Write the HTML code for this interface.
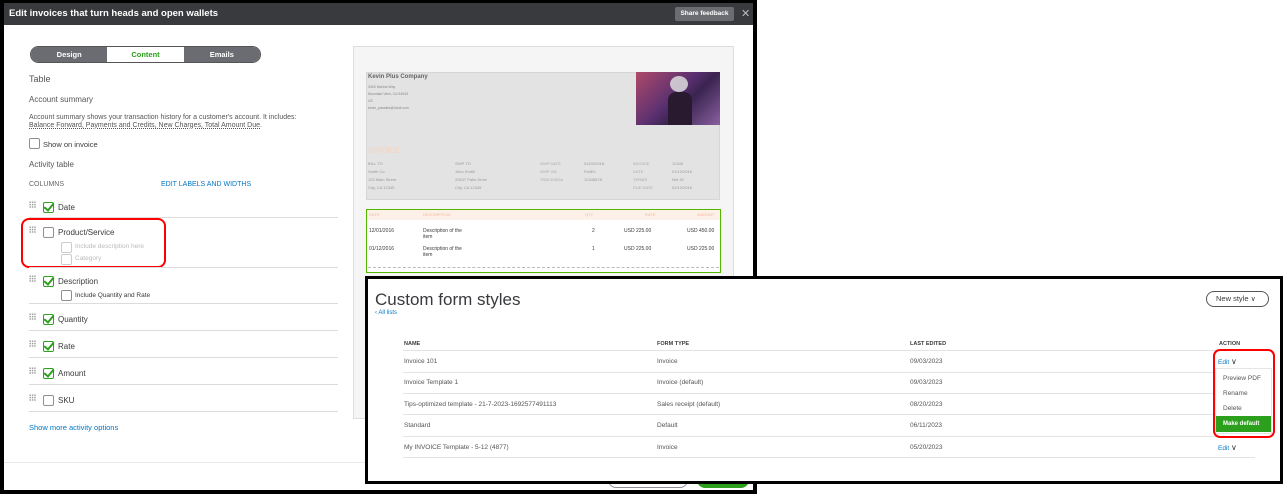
<!DOCTYPE html>
<html><head><style>
*{box-sizing:border-box;margin:0;padding:0}
body{width:1284px;height:496px;background:#fff;position:relative;overflow:hidden;font-family:"Liberation Sans",sans-serif;color:#393a3d}
.a{position:absolute}
.t{position:absolute;font-size:8px;white-space:nowrap}
.cb{position:absolute;width:11px;height:11px;border:1px solid #8d9096;border-radius:2px;background:#fff}
.cb.on{border-color:#2ca01c}
.cb.on::after{content:"";position:absolute;left:2px;top:-2px;width:4px;height:8px;border:solid #2ca01c;border-width:0 2px 2px 0;transform:rotate(40deg)}
.cb.lt{border-color:#ccc}
.grip{position:absolute;width:7px;height:7px;background-image:radial-gradient(#999 0.7px,transparent 0.8px);background-size:2.4px 2.4px}
.hl{position:absolute;left:29px;width:309px;height:1px;background:#dcdcdc}
.rl{position:absolute;left:403px;width:852px;height:1px;background:#e3e3e3}
.r{position:absolute;font-size:6.5px;color:#555;white-space:nowrap}
</style></head><body>
<div class="a" style="left:0;top:0;width:757px;height:494px;border:4px solid #000;border-top-width:3px;background:#fff"></div>
<div class="a" style="left:4px;top:3px;width:749px;height:22px;background:#393a3d"></div>
<div class="t" style="left:9px;top:8px;font-size:9.5px;color:#fff;font-weight:bold">Edit invoices that turn heads and open wallets</div>
<div class="a" style="left:675px;top:7px;width:59px;height:14px;background:#6b6c72;border-radius:2px;color:#fff;font-size:6.5px;font-weight:bold;text-align:center;line-height:14px">Share feedback</div>
<div class="t" style="left:741px;top:7px;font-size:11px;color:#bbb">✕</div>
<div class="a" style="left:30px;top:46px;width:231px;height:17px;border:1px solid #555;border-radius:9px;overflow:hidden;display:flex;font-size:7.5px;font-weight:bold;line-height:15px;text-align:center">
<div style="flex:1;background:#6b6c72;color:#fff">Design</div><div style="flex:1;background:#fff;color:#2ca01c">Content</div><div style="flex:1;background:#6b6c72;color:#fff">Emails</div></div>
<div class="t" style="left:29px;top:74px;font-size:9px;color:#555">Table</div>
<div class="t" style="left:29px;top:95px;color:#555">Account summary</div>
<div class="t" style="left:29px;top:114px;font-size:7px;color:#555">Account summary shows your transaction history for a customer's account. It includes:</div>
<div class="t" style="left:29px;top:122px;font-size:7px;color:#555;text-decoration:underline dotted">Balance Forward, Payments and Credits, New Charges, Total Amount Due.</div>
<div class="cb" style="left:29px;top:138px"></div><div class="t" style="left:43px;top:140px;font-size:7.5px">Show on invoice</div>
<div class="t" style="left:29px;top:160px;color:#555">Activity table</div>
<div class="t" style="left:29px;top:181px;font-size:7px;color:#666">COLUMNS</div>
<div class="t" style="left:161px;top:181px;font-size:7px;color:#0077c5">EDIT LABELS AND WIDTHS</div>
<div class="grip" style="left:29px;top:201px"></div><div class="cb on" style="left:43px;top:202px"></div><div class="t" style="left:58px;top:203px">Date</div>
<div class="hl" style="top:217px"></div>
<div class="grip" style="left:29px;top:226px"></div><div class="cb" style="left:43px;top:227px"></div><div class="t" style="left:58px;top:228px">Product/Service</div>
<div class="cb lt" style="left:61px;top:242px"></div><div class="t" style="left:75px;top:243px;font-size:6.5px;color:#bbb">Include description here</div>
<div class="cb lt" style="left:61px;top:254px"></div><div class="t" style="left:75px;top:255px;font-size:6.5px;color:#bbb">Category</div>
<div class="a" style="left:21px;top:218px;width:145px;height:50px;border:2.5px solid #f00;border-radius:8px"></div>
<div class="hl" style="top:267px"></div>
<div class="grip" style="left:29px;top:275px"></div><div class="cb on" style="left:43px;top:276px"></div><div class="t" style="left:58px;top:277px">Description</div>
<div class="cb" style="left:61px;top:290px"></div><div class="t" style="left:75px;top:292px;font-size:6.5px">Include Quantity and Rate</div>
<div class="hl" style="top:303px"></div>
<div class="grip" style="left:29px;top:313px"></div><div class="cb on" style="left:43px;top:314px"></div><div class="t" style="left:58px;top:315px">Quantity</div>
<div class="hl" style="top:330px"></div>
<div class="grip" style="left:29px;top:340px"></div><div class="cb on" style="left:43px;top:341px"></div><div class="t" style="left:58px;top:342px">Rate</div>
<div class="hl" style="top:357px"></div>
<div class="grip" style="left:29px;top:367px"></div><div class="cb on" style="left:43px;top:368px"></div><div class="t" style="left:58px;top:369px">Amount</div>
<div class="hl" style="top:384px"></div>
<div class="grip" style="left:29px;top:394px"></div><div class="cb" style="left:43px;top:395px"></div><div class="t" style="left:58px;top:396px">SKU</div>
<div class="hl" style="top:411px"></div>
<div class="t" style="left:29px;top:423px;font-size:7.5px;color:#0077c5">Show more activity options</div>
<div class="a" style="left:4px;top:462px;width:749px;height:1px;background:#e8e8e8"></div>
<div class="a" style="left:608px;top:472px;width:80px;height:16px;border:1px solid #8d9096;border-radius:8px"></div>
<div class="a" style="left:697px;top:472px;width:52px;height:16px;background:#2ca01c;border-radius:8px"></div>
<div class="a" style="left:353px;top:46px;width:381px;height:373px;background:#f5f5f5;border:1px solid #ddd"></div>
<div class="a" style="left:366px;top:72px;width:354px;height:128px;background:#e3e3e3;border:1px solid #d6d6d6"></div>
<div class="t" style="left:368px;top:74px;font-size:6px;font-weight:bold;color:#666">Kevin Plus Company</div>
<div class="t" style="left:368px;top:84px;font-size:3.5px;color:#888;line-height:7px">3400 Marina Way<br>Mountain View, CA 94043<br>US<br>kevin_pasates@intuit.com</div>
<div class="a" style="left:636px;top:72px;width:84px;height:53px;background:linear-gradient(135deg,#b04a6a,#5a3070 45%,#3a2450 60%,#8a60a0)"></div>
<div class="a" style="left:670px;top:76px;width:18px;height:16px;border-radius:50%;background:#ddd;opacity:.85"></div>
<div class="a" style="left:668px;top:92px;width:24px;height:33px;border-radius:8px 8px 0 0;background:#2a1a30"></div>
<div class="t" style="left:368px;top:146px;font-size:8px;color:#f5d3c0">INVOICE</div>
<div class="t" style="left:368px;top:160px;font-size:4px;color:#999;line-height:8px">BILL TO<br>Smith Co.<br>123 Main Street<br>City, CA 12345</div>
<div class="t" style="left:455px;top:160px;font-size:4px;color:#999;line-height:8px">SHIP TO<br>John Smith<br>20637 Palm Drive<br>City, CA 12345</div>
<div class="t" style="left:540px;top:160px;font-size:4px;color:#aaa;line-height:8px">SHIP DATE<br>SHIP VIA<br>TRACKING#</div>
<div class="t" style="left:584px;top:160px;font-size:4px;color:#999;line-height:8px">01/03/2018<br>FedEx<br>12345678</div>
<div class="t" style="left:633px;top:160px;font-size:4px;color:#aaa;line-height:8px">INVOICE<br>DATE<br>TERMS<br>DUE DATE</div>
<div class="t" style="left:672px;top:160px;font-size:4px;color:#999;line-height:8px">12345<br>01/12/2016<br>Net 30<br>02/12/2016</div>
<div class="a" style="left:366px;top:209px;width:355px;height:64px;border:1px solid #53b700;background:#fff"></div>
<div class="a" style="left:367px;top:210px;width:353px;height:10px;background:#fdf0e8"></div>
<div class="t" style="left:369px;top:212px;font-size:4px;color:#f3b89a">DATE</div>
<div class="t" style="left:423px;top:212px;font-size:4px;color:#f3b89a">DESCRIPTION</div>
<div class="t" style="left:585px;top:212px;font-size:4px;color:#f3b89a">QTY</div>
<div class="t" style="left:645px;top:212px;font-size:4px;color:#f3b89a">RATE</div>
<div class="t" style="left:697px;top:212px;font-size:4px;color:#f3b89a">AMOUNT</div>
<div class="t" style="left:369px;top:228px;font-size:5px;line-height:6px">12/01/2016</div><div class="t" style="left:423px;top:228px;font-size:5px;line-height:6px">Description of the<br>item</div><div class="t" style="left:592px;top:228px;font-size:5px">2</div><div class="t" style="left:624px;top:228px;font-size:5px">USD 225.00</div><div class="t" style="left:687px;top:228px;font-size:5px">USD 450.00</div>
<div class="t" style="left:369px;top:246px;font-size:5px;line-height:6px">01/12/2016</div><div class="t" style="left:423px;top:246px;font-size:5px;line-height:6px">Description of the<br>item</div><div class="t" style="left:592px;top:246px;font-size:5px">1</div><div class="t" style="left:624px;top:246px;font-size:5px">USD 225.00</div><div class="t" style="left:687px;top:246px;font-size:5px">USD 225.00</div>
<div class="a" style="left:368px;top:267px;width:351px;border-top:1px dashed #bbb"></div>
<div class="a" style="left:365px;top:276px;width:918px;height:208px;border:3px solid #000;background:#fff"></div>
<div class="t" style="left:375px;top:290px;font-size:17px;color:#393a3d">Custom form styles</div>
<div class="t" style="left:375px;top:310px;font-size:6px;color:#0077c5">‹ All lists</div>
<div class="a" style="left:1206px;top:291px;width:63px;height:16px;border:1px solid #555;border-radius:8px;font-size:7.5px;line-height:14px;padding-left:9px">New style <span style="font-size:7px">∨</span></div>
<div class="r" style="left:404px;top:341px;font-weight:bold;color:#393a3d;font-size:5.5px">NAME</div>
<div class="r" style="left:657px;top:341px;font-weight:bold;color:#393a3d;font-size:5.5px">FORM TYPE</div>
<div class="r" style="left:910px;top:341px;font-weight:bold;color:#393a3d;font-size:5.5px">LAST EDITED</div>
<div class="r" style="left:1219px;top:341px;font-weight:bold;color:#393a3d;font-size:5.5px">ACTION</div>
<div class="rl" style="top:350px"></div><div class="rl" style="top:372px"></div><div class="rl" style="top:393px"></div><div class="rl" style="top:414px"></div><div class="rl" style="top:436px"></div><div class="rl" style="top:457px"></div>
<div class="r" style="left:404px;top:358px">Invoice 101</div><div class="r" style="left:657px;top:358px">Invoice</div><div class="r" style="left:910px;top:358px">09/03/2023</div>
<div class="r" style="left:404px;top:379px">Invoice Template 1</div><div class="r" style="left:657px;top:379px">Invoice (default)</div><div class="r" style="left:910px;top:379px">09/03/2023</div>
<div class="r" style="left:404px;top:401px">Tips-optimized template - 21-7-2023-1692577491113</div><div class="r" style="left:657px;top:401px">Sales receipt (default)</div><div class="r" style="left:910px;top:401px">08/20/2023</div>
<div class="r" style="left:404px;top:422px">Standard</div><div class="r" style="left:657px;top:422px">Default</div><div class="r" style="left:910px;top:422px">06/11/2023</div>
<div class="r" style="left:404px;top:444px">My INVOICE Template - 5-12 (4877)</div><div class="r" style="left:657px;top:444px">Invoice</div><div class="r" style="left:910px;top:444px">05/20/2023</div>
<div class="r" style="left:1218px;top:357px;color:#0077c5">Edit <span style="color:#393a3d;font-size:8px">∨</span></div>
<div class="r" style="left:1218px;top:443px;color:#0077c5">Edit <span style="color:#393a3d;font-size:8px">∨</span></div>
<div class="a" style="left:1215px;top:368px;width:57px;height:66px;background:#fff;border:1px solid #e5e5e5"></div>
<div class="r" style="left:1223px;top:375px">Preview PDF</div>
<div class="r" style="left:1223px;top:390px">Rename</div>
<div class="r" style="left:1223px;top:405px">Delete</div>
<div class="a" style="left:1216px;top:416px;width:55px;height:16px;background:#2ca01c;color:#fff;font-size:6px;font-weight:bold;line-height:16px;padding-left:7px">Make default</div>
<div class="a" style="left:1213px;top:349px;width:62px;height:89px;border:2.5px solid #f00;border-radius:7px"></div>
</body></html>
